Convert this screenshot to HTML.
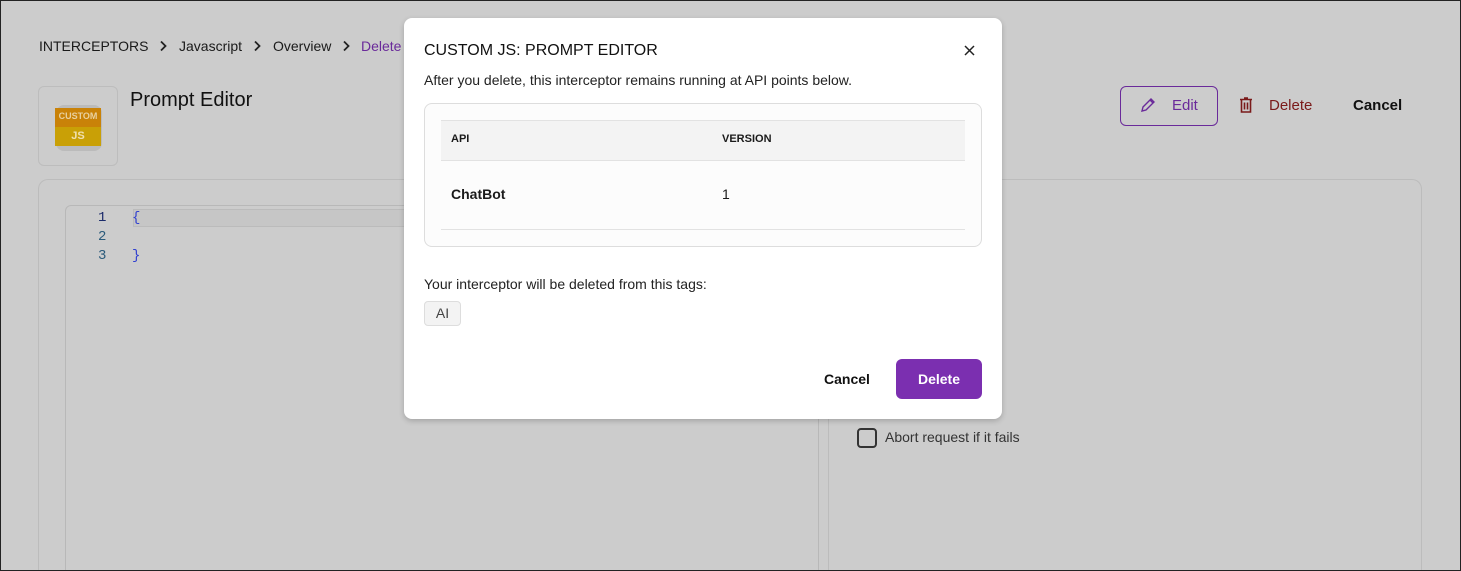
<!DOCTYPE html>
<html><head><meta charset="utf-8"><style>
*{box-sizing:border-box;margin:0;padding:0}
html{width:1461px;height:571px;overflow:hidden}
body{width:1461px;height:571px;overflow:hidden;background:#cccccc;font-family:"Liberation Sans",Arial,sans-serif;position:relative;color:#1a1a1a}
.frame{position:absolute;left:0;top:0;width:1461px;height:571px;border:1px solid #222;pointer-events:none;z-index:20}
.abs{position:absolute}
.cr{top:38px;font-size:14px;color:#1a1a1a;white-space:nowrap}
.logo{left:38px;top:86px;width:80px;height:80px;border:1px solid #bdbdbd;border-radius:6px}
.title{left:130px;top:89px;font-size:20px;color:#111}
.panel{left:38px;top:179px;width:1384px;height:392px;border:1px solid #bcbcbc;border-bottom:none;border-radius:10px 10px 0 0}
.editor{left:65px;top:205px;width:754px;height:366px;border:1px solid #b8b8b8;border-bottom:none;border-radius:6px 6px 0 0}
.rightline{left:828px;top:179px;width:1px;height:392px;background:#bcbcbc}
.code{font-family:"Liberation Mono",monospace;font-size:14px}
.modal{left:404px;top:18px;width:598px;height:401px;background:#fff;border-radius:8px;box-shadow:0 2px 6px rgba(0,0,0,.2);z-index:10}
</style></head><body>
<div class="frame"></div>
<div class="abs cr" style="left:39px">INTERCEPTORS</div>
<svg class="abs" style="left:159px;top:40px" width="8" height="12" viewBox="0 0 8 12"><path d="M2 1.5l4.5 4.5-4.5 4.5" fill="none" stroke="#222" stroke-width="1.8"/></svg>
<div class="abs cr" style="left:179px">Javascript</div>
<svg class="abs" style="left:253px;top:40px" width="8" height="12" viewBox="0 0 8 12"><path d="M2 1.5l4.5 4.5-4.5 4.5" fill="none" stroke="#222" stroke-width="1.8"/></svg>
<div class="abs cr" style="left:273px">Overview</div>
<svg class="abs" style="left:342px;top:40px" width="8" height="12" viewBox="0 0 8 12"><path d="M2 1.5l4.5 4.5-4.5 4.5" fill="none" stroke="#222" stroke-width="1.8"/></svg>
<div class="abs cr" style="left:361px;color:#6a2a9a">Delete</div>
<div class="abs logo">
 <div class="abs" style="left:17px;top:18px;width:46px;height:46px;background:#bbb;border-radius:8px"></div>
 <div class="abs" style="left:16px;top:21px;width:46px;height:19px;background:#c98208"></div>
 <div class="abs" style="left:16px;top:40px;width:46px;height:19px;background:#c9a006"></div>
 <div class="abs" style="left:16px;top:24px;width:46px;text-align:center;font-size:9px;font-weight:bold;color:#e8d0a0">CUSTOM</div>
 <div class="abs" style="left:16px;top:43px;width:46px;text-align:center;font-size:11px;font-weight:bold;color:#f0e0b0">JS</div>
</div>
<div class="abs title">Prompt Editor</div>
<div class="abs" style="left:1120px;top:86px;width:98px;height:40px;border:1px solid #6a2a9a;border-radius:6px"></div>
<svg class="abs" style="left:1140px;top:97px" width="16" height="16" viewBox="0 0 16 16"><path d="M2 14l1-4 8-8 3 3-8 8z M10 3l3 3" fill="none" stroke="#6a2a9a" stroke-width="1.4"/></svg>
<div class="abs" style="left:1172px;top:97px;font-size:15px;color:#6a2a9a">Edit</div>
<svg class="abs" style="left:1239px;top:97px" width="14" height="16" viewBox="0 0 14 16"><path d="M1 2.5h12M5 1h4M2.5 3v12h9V3M5.5 5.5v7M8.5 5.5v7" fill="none" stroke="#7a1a1a" stroke-width="1.6"/></svg>
<div class="abs" style="left:1269px;top:97px;font-size:15px;color:#7a1a1a">Delete</div>
<div class="abs" style="left:1353px;top:97px;font-size:15px;font-weight:bold;color:#111">Cancel</div>
<div class="abs panel"></div>
<div class="abs editor"></div>
<div class="abs rightline"></div>
<div class="abs" style="left:133px;top:209px;width:290px;height:18px;border:1px solid #bbb;background:#c6c6c6"></div>
<div class="abs code" style="left:98px;top:210px;color:#1a2a6a">1</div>
<div class="abs code" style="left:98px;top:229px;color:#2a5a7a">2</div>
<div class="abs code" style="left:98px;top:248px;color:#2a5a7a">3</div>
<div class="abs code" style="left:132px;top:210px;color:#3040d0">{</div>
<div class="abs code" style="left:132px;top:248px;color:#3040d0">}</div>
<div class="abs" style="left:857px;top:428px;width:20px;height:20px;border:2px solid #333;border-radius:4px"></div>
<div class="abs" style="left:885px;top:429px;font-size:14px;color:#333">Abort request if it fails</div>

<div class="abs modal">
 <div class="abs" style="left:20px;top:24px;font-size:16px;color:#111">CUSTOM JS: PROMPT EDITOR</div>
 <svg class="abs" style="left:560px;top:27px" width="11" height="11" viewBox="0 0 11 11"><path d="M1 1l9 9M10 1l-9 9" stroke="#222" stroke-width="1.5"/></svg>
 <div class="abs" style="left:20px;top:54px;font-size:14px;color:#222">After you delete, this interceptor remains running at API points below.</div>
 <div class="abs" style="left:20px;top:85px;width:558px;height:144px;border:1px solid #ddd;border-radius:8px;background:#fcfcfc">
  <div class="abs" style="left:16px;top:16px;width:524px;height:41px;background:#f3f3f3;border-top:1px solid #e2e2e2;border-bottom:1px solid #e2e2e2"></div>
  <div class="abs" style="left:26px;top:29px;font-size:11px;font-weight:bold">API</div>
  <div class="abs" style="left:297px;top:29px;font-size:11px;font-weight:bold">VERSION</div>
  <div class="abs" style="left:26px;top:82px;font-size:14px;font-weight:bold">ChatBot</div>
  <div class="abs" style="left:297px;top:82px;font-size:14px">1</div>
  <div class="abs" style="left:16px;top:125px;width:524px;height:1px;background:#e2e2e2"></div>
 </div>
 <div class="abs" style="left:20px;top:258px;font-size:14px;color:#222">Your interceptor will be deleted from this tags:</div>
 <div class="abs" style="left:20px;top:283px;width:37px;height:25px;border:1px solid #ddd;border-radius:4px;background:#f3f3f3;font-size:14px;color:#444;text-align:center;line-height:23px">AI</div>
 <div class="abs" style="left:420px;top:353px;font-size:14px;font-weight:bold;color:#111">Cancel</div>
 <div class="abs" style="left:492px;top:341px;width:86px;height:40px;background:#7b2fb0;border-radius:6px;color:#fff;font-size:14px;font-weight:bold;text-align:center;line-height:40px">Delete</div>
</div>
</body></html>
